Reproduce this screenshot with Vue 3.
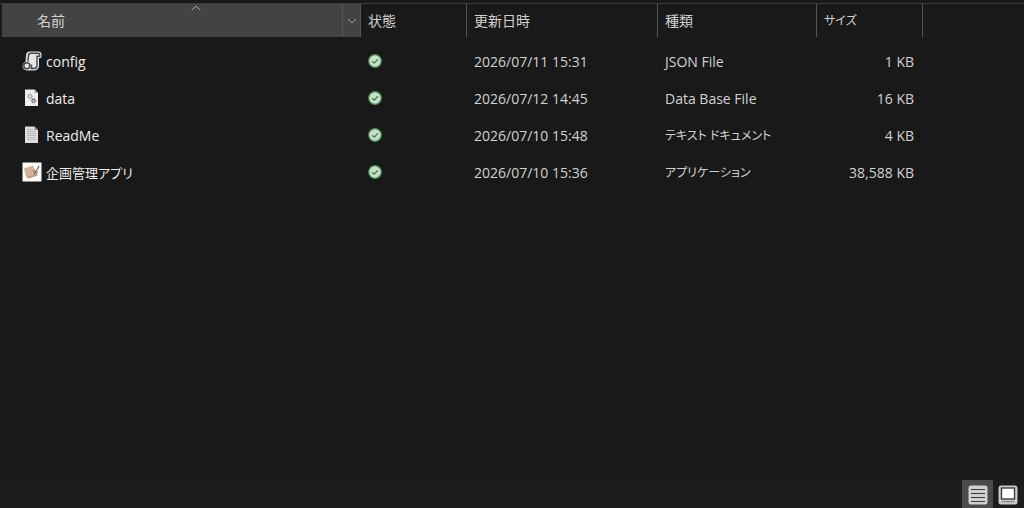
<script setup>
import { ref } from 'vue'

const files = [
  { icon: 'json', name: 'config', date: '2026/07/11 15:31', type: 'JSON File', size: '1 KB' },
  { icon: 'db', name: 'data', date: '2026/07/12 14:45', type: 'Data Base File', size: '16 KB' },
  { icon: 'text', name: 'ReadMe', date: '2026/07/10 15:48', type: 'テキスト ドキュメント', size: '4 KB', kana: true },
  { icon: 'app', name: '企画管理アプリ', date: '2026/07/10 15:36', type: 'アプリケーション', size: '38,588 KB', kana: true }
]
const view = ref('details')
</script>

<template>
  <div class="explorer">
    <main class="pane">
      <table class="files">
        <colgroup>
          <col class="col-name" />
          <col class="col-state" />
          <col class="col-date" />
          <col class="col-type" />
          <col class="col-size" />
          <col />
        </colgroup>
        <thead>
          <tr>
            <th class="sorted" aria-sort="ascending">
              <div class="head">
                <button class="label first">名前</button>
                <button class="filter" aria-label="名前のフィルター">
                  <svg width="10" height="6" viewBox="0 0 10 6"><path d="M1 1l4 4 4-4" /></svg>
                </button>
              </div>
              <svg class="arrow" width="10" height="6" viewBox="0 0 10 6"><path d="M.7 5.3 5 1l4.300 4.300" /></svg>
            </th>
            <th><button class="label">状態</button></th>
            <th><button class="label">更新日時</button></th>
            <th><button class="label">種類</button></th>
            <th><button class="label kana">サイズ</button></th>
            <td></td>
          </tr>
        </thead>
        <tbody>
          <tr v-for="f in files" :key="f.name">
            <td>
              <div class="name">
                <svg v-if="f.icon === 'json'" width="20" height="20" viewBox="0 0 20 20">
                  <path d="M7 1h10q2 0 2 2v3.500h-2.500V15q0 3.500-3.500 4H4.500A4 4 0 0 1 1 15q0-3 3-4l.5-7.500Q5 1 7 1z" fill="#e6e6e6" stroke="#e2e2e2" stroke-linejoin="round" />
                  <path d="M6 10.500l.5-6q.2-2.200 2.300-2.200H16q1.700 0 1.700 1.700v1.300H15V14q0 3.500-3 3.500H8.500M9.500 13.500v2.200q0 1.500 2 1.700" fill="none" stroke="#43474a" stroke-width="1.400" />
                  <circle cx="4.800" cy="14.700" r="3" fill="#e6e6e6" stroke="#43474a" stroke-width="1.500" />
                </svg>
                <svg v-else-if="f.icon === 'db'" width="20" height="20" viewBox="0 0 20 20">
                  <path d="M3 1.500h9.500L16 5v13H3z" fill="#efefef" />
                  <path d="M12.500 1.500V5H16z" fill="#a8a8a8" />
                  <circle cx="8" cy="8.300" r="1.700" fill="none" stroke="#a5a8aa" stroke-width="1.200" />
                  <circle cx="8" cy="8.300" r="2.700" fill="none" stroke="#a5a8aa" stroke-width=".8" stroke-dasharray="1 1.300" />
                  <circle cx="11.500" cy="12.700" r="1.500" fill="none" stroke="#70777b" stroke-width="1.200" />
                  <circle cx="11.500" cy="12.700" r="2.400" fill="none" stroke="#70777b" stroke-width=".8" stroke-dasharray="1 1.100" />
                </svg>
                <svg v-else-if="f.icon === 'text'" width="20" height="20" viewBox="0 0 20 20">
                  <path d="M3 1.500h9.500L16 5v13H3z" fill="#dedede" />
                  <path d="M12.500 1.500V5H16z" fill="#8f8f8f" />
                  <path d="M5 4.500h6.500M5 6.500h9M5 8.500h9M5 10.500h9M5 12.500h9M5 14.500h9" stroke="#b0b0b0" stroke-width=".8" />
                </svg>
                <svg v-else width="20" height="20" viewBox="0 0 20 20">
                  <path d="M.5.5h19v19H.5z" fill="#fbfbfa" />
                  <path d="m2 6.500 9-3 4.500 10L6 16.500 3.500 13z" fill="#d5b397" />
                  <path d="m3.500 13 2 1.700L15.500 12v1.500L6 16.500z" fill="#bd997d" />
                  <path d="m12 12.500 5.200-8.500" stroke="#696564" stroke-width="1.300" />
                  <path d="m11.500 8 1.300 3.500 3.200-1.500" fill="none" stroke="#8b7b70" stroke-width="1.200" />
                </svg>
                <span :class="{ mixed: f.icon === 'app' }">{{ f.name }}</span>
              </div>
            </td>
            <td>
              <svg class="synced" width="14" height="14" viewBox="0 0 14 14" role="img" aria-label="同期済み">
                <circle cx="7" cy="7" r="6.300" fill="#d0dbd0" stroke="#399447" stroke-width="1.200" />
                <path d="m4.200 7.200 2 1.900L9.900 5.300" fill="none" stroke="#2f8b3d" stroke-width="1.300" />
              </svg>
            </td>
            <td>{{ f.date }}</td>
            <td :class="{ kana: f.kana }">{{ f.type }}</td>
            <td class="size">{{ f.size }}</td>
            <td></td>
          </tr>
        </tbody>
      </table>
    </main>
    <footer class="status">
      <button class="view" :class="{ on: view === 'details' }" aria-label="詳細" @click="view = 'details'">
        <svg width="20" height="20" viewBox="0 0 20 20">
          <rect x=".5" y=".5" width="19" height="19" rx="2.500" fill="#d0d0d0" />
          <path d="M3 4.500h14M3 8.500h14M3 12.500h14M3 16.500h14" stroke="#383838" stroke-width="1.200" />
        </svg>
      </button>
      <button class="view" :class="{ on: view === 'large' }" aria-label="大アイコン" @click="view = 'large'">
        <svg width="20" height="20" viewBox="0 0 20 20">
          <rect x=".5" y=".5" width="19" height="19" rx="2.500" fill="#c8c8c8" />
          <rect x="3.500" y="3" width="13" height="11" fill="#fff" stroke="#333" stroke-width="1.300" />
          <path d="M4 16.700h12" stroke="#777" />
        </svg>
      </button>
    </footer>
  </div>
</template>

<style>
body {
  background: #191919;
}
</style>

<style scoped>
.explorer {
  box-sizing: border-box;
  min-height: 100vh;
  padding-top: 3px;
  display: flex;
  flex-direction: column;
  background: #191919;
  color: #d2d2d2;
  font: 14px/20px "Open Sans", "Noto Sans CJK JP", sans-serif;
  font-feature-settings: "palt";
}
.pane {
  flex: 1;
  border-top: 1px solid #383838;
  padding-left: 2px;
}
.files {
  width: 100%;
  table-layout: fixed;
  border-collapse: separate;
  border-spacing: 0;
}
.col-name { width: 359px; }
.col-state { width: 106px; }
.col-date { width: 191px; }
.col-type { width: 159px; }
.col-size { width: 106px; }
th {
  position: relative;
  height: 33px;
  padding: 0;
  border-right: 1px solid #555;
  font-weight: 400;
  text-align: left;
}
.sorted {
  background: #434343;
}
.head {
  display: flex;
  height: 33px;
}
button {
  border: 0;
  margin: 0;
  padding: 0;
  background: none;
  color: inherit;
  font: inherit;
  font-feature-settings: inherit;
  text-align: left;
}
.label {
  width: 100%;
  height: 33px;
  padding-left: 7px;
}
.first {
  flex: 1;
  padding-left: 35px;
}
.filter {
  width: 18px;
  border-left: 1px solid #555;
  display: flex;
  align-items: center;
  justify-content: center;
}
.filter path,
.arrow path {
  fill: none;
  stroke: #a5a5a5;
}
.arrow {
  position: absolute;
  top: 1px;
  left: 189px;
}
tbody::before {
  content: "";
  display: block;
  height: 6px;
}
tbody td {
  height: 37px;
  padding: 0 9px 0 7px;
}
.name {
  display: flex;
  align-items: center;
  gap: 4px;
  padding-left: 13px;
  color: #ededed;
}
.name svg,
.synced {
  display: block;
  margin-bottom: 2px;
}
.kana {
  font-size: 12px;
}
.mixed {
  font-size: 13px;
}
tbody .size {
  text-align: right;
}
.status {
  display: flex;
  justify-content: flex-end;
  height: 28px;
  padding-right: 1px;
  background: #1c1c1c;
}
.view {
  width: 30px;
  display: flex;
  align-items: center;
  justify-content: center;
  padding-top: 2px;
}
.view.on {
  width: 31px;
  background: #4b4b4b;
}
</style>
